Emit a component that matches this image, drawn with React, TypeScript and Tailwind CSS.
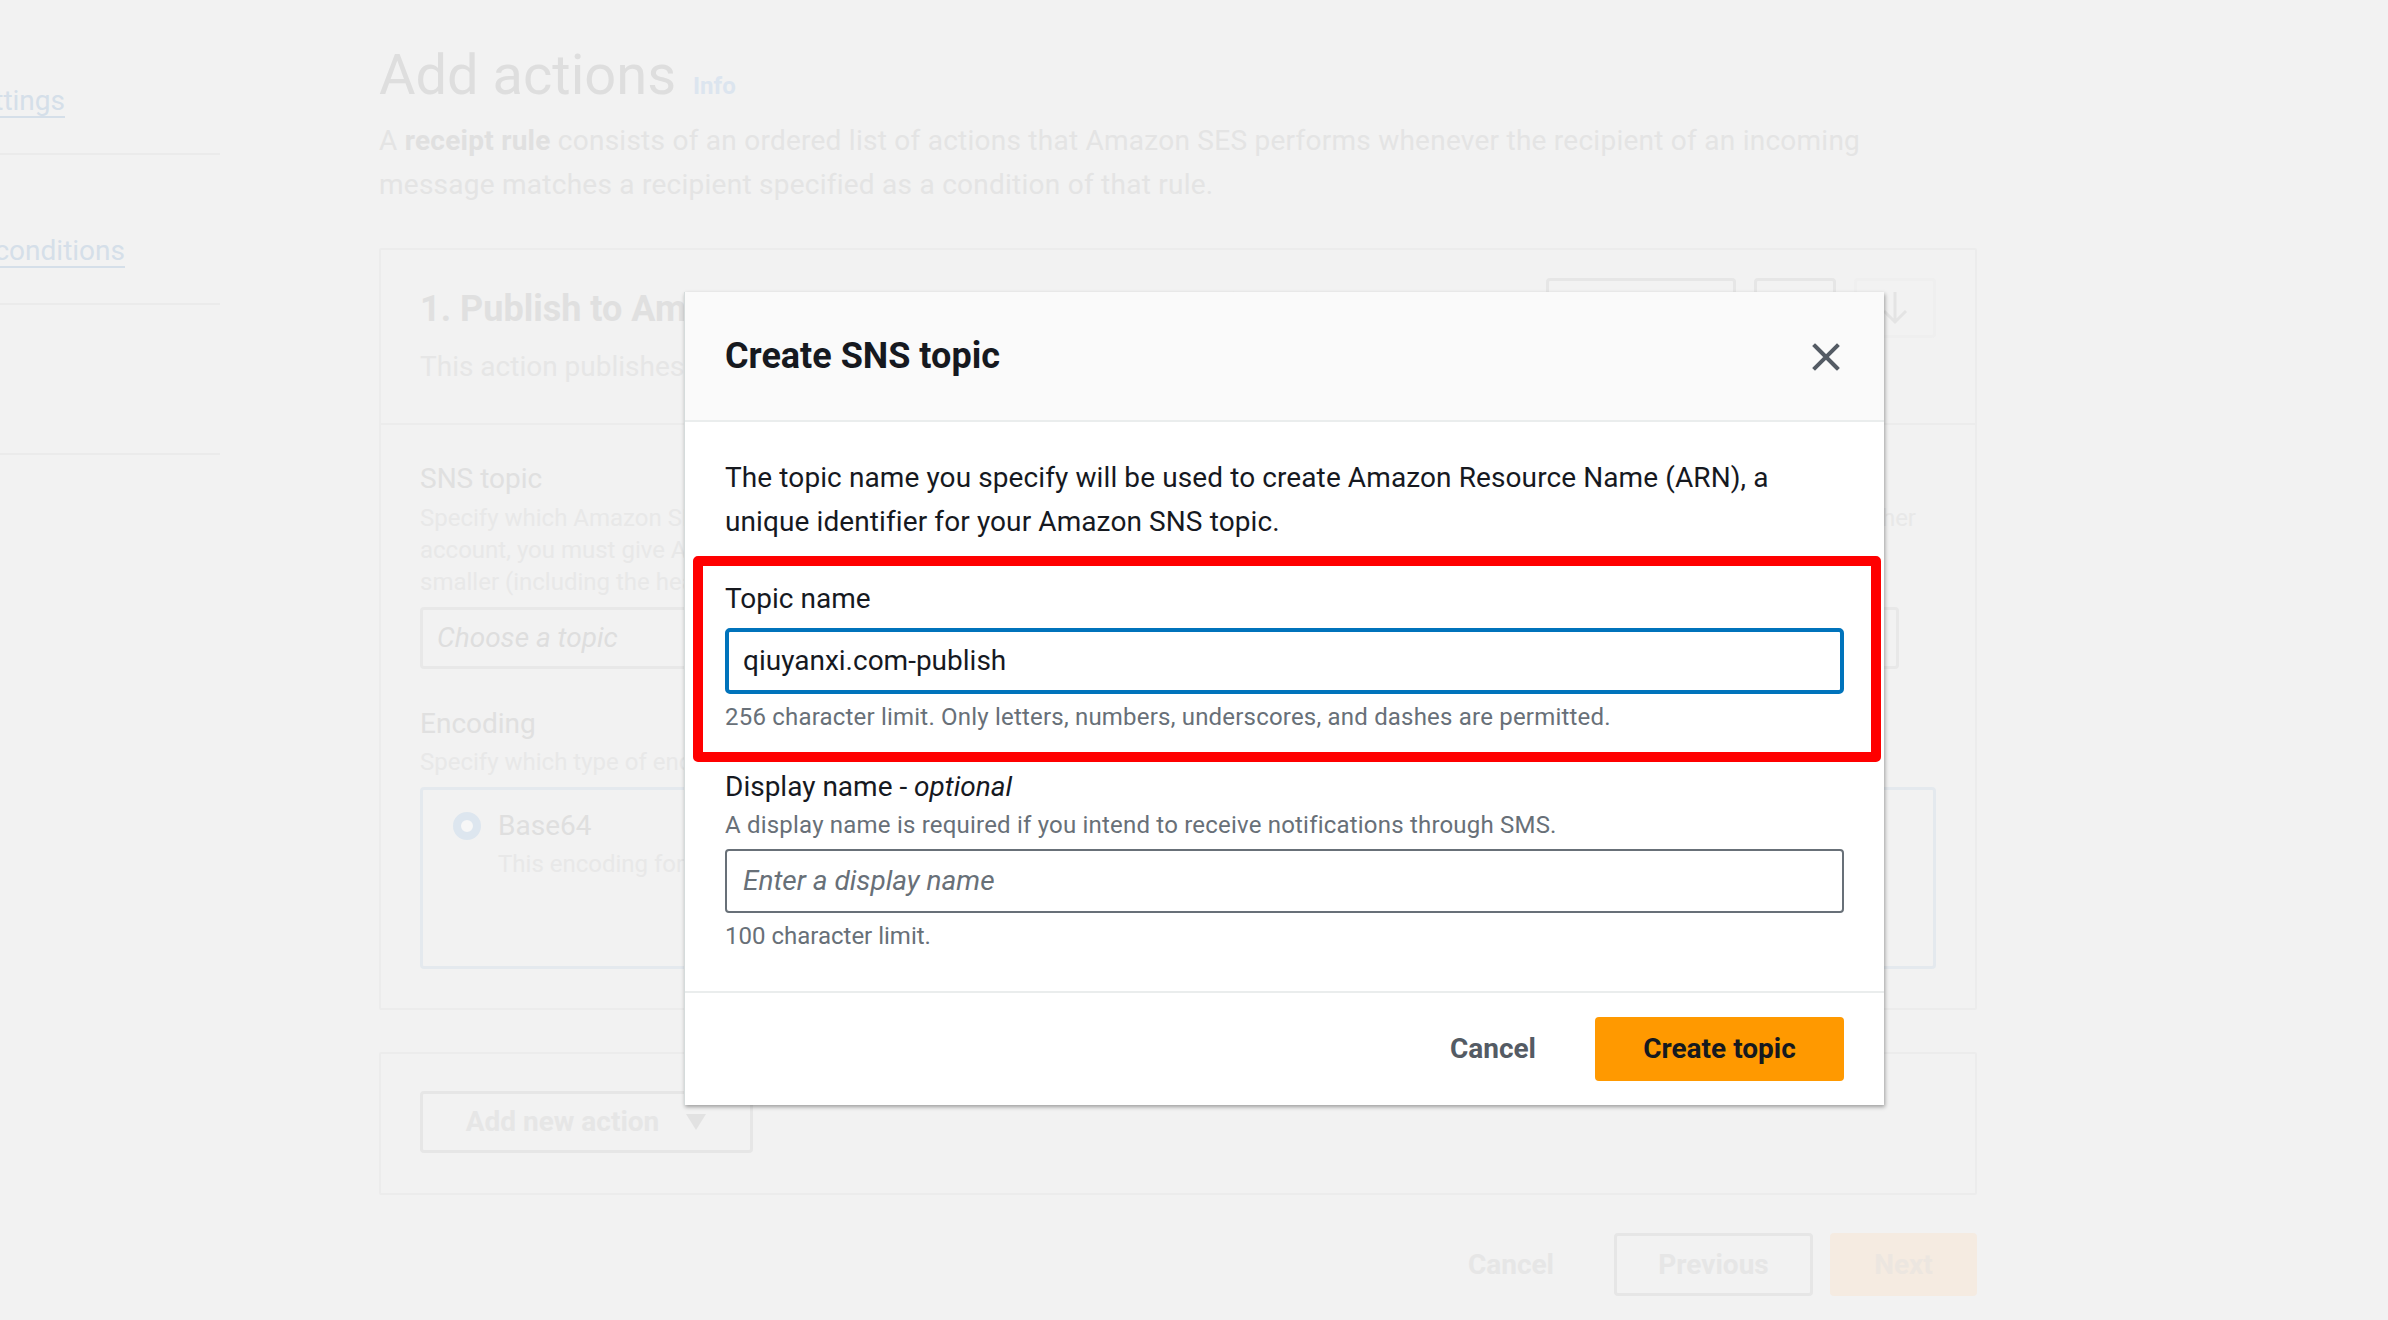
import React from "react";

const F = { fontFamily: "Roboto, 'Noto Sans', sans-serif" } as React.CSSProperties;

function NavItem({ text, width }: { text: string; width: number }) {
  return (
    <div className="h-[150px] border-b-2 border-[#ebebeb] flex flex-col justify-end pb-[30px]">
      {text ? (
        <div className="flex justify-end overflow-hidden whitespace-nowrap" style={{ width }}>
          <span className="text-[28px] leading-[44px] text-[#d5dfe9] underline decoration-2 underline-offset-[6px]">
            {text}
          </span>
        </div>
      ) : (
        <div className="h-[44px]" />
      )}
    </div>
  );
}

function Background() {
  return (
    <div className="flex">
      <nav className="w-[220px] pt-[5px] shrink-0">
        <NavItem text="Rule settings" width={65} />
        <NavItem text="Recipient conditions" width={125} />
        <NavItem text="" width={0} />
      </nav>
      <main className="ml-[159px] w-[1598px] pt-[35px]">
        <div className="flex items-baseline">
          <h1 className="text-[56px] leading-[80px] text-[#dedede]">Add actions</h1>
          <span className="ml-[17px] text-[24px] font-bold text-[#dce5ef]">Info</span>
        </div>
        <p className="mt-[4px] text-[28px] leading-[44px] text-[#e4e4e4] whitespace-nowrap tracking-[0.25px]">
          A <b className="text-[#e0e0e0]">receipt rule</b> consists of an ordered list of actions that Amazon SES performs whenever the recipient of an incoming
          <br />
          message matches a recipient specified as a condition of that rule.
        </p>

        <section className="mt-[41px] border-2 border-[#ececec] rounded-[2px]">
          <div className="flex justify-between items-start pl-[39px] pr-[39px] pt-[37px] pb-[34px] border-b-2 border-[#ececec]">
            <div>
              <div className="text-[36px] leading-[44px] font-bold text-[#e0e0e0] whitespace-nowrap">
                1. Publish to Amazon Simple Notification Service (SNS) topic
              </div>
              <div className="mt-[14px] text-[28px] leading-[44px] text-[#e6e6e6] whitespace-nowrap">
                This action publishes the email to an Amazon SNS topic.
              </div>
            </div>
            <div className="flex gap-[18px] -mt-[9px]">
              <div className="w-[190px] h-[60px] border-[3px] border-[#e6e6e6] rounded-[4px]" />
              <div className="w-[82px] h-[60px] border-[3px] border-[#e6e6e6] rounded-[4px]" />
              <div className="w-[82px] h-[60px] border-[3px] border-[#efefef] rounded-[4px] flex items-center justify-center">
                <svg width="30" height="36" viewBox="0 0 30 36" fill="none" stroke="#e4e4e4" strokeWidth="3">
                  <path d="M15 2v30M4 21l11 11 11-11" />
                </svg>
              </div>
            </div>
          </div>
          <div className="pl-[39px] pr-[39px] pt-[32px] pb-[39px]">
            <div className="text-[28px] leading-[44px] text-[#e0e0e0]">SNS topic</div>
            <div className="mt-[1px] text-[24px] leading-[32px] text-[#e8e8e8] whitespace-nowrap">
              <div className="flex justify-between pr-[20px]">
                <span>Specify which Amazon SNS topic you want to publish to. If the topic is owned by</span>
                <span>another</span>
              </div>
              <div>account, you must give Amazon SES permission to publish to it. The message must be 150 KB or</div>
              <div>smaller (including the header).</div>
            </div>
            <div className="mt-[9px] h-[62px] w-[1479px] border-[3px] border-[#e8e8e8] rounded-[4px] flex items-center pl-[14px]">
              <span className="text-[28px] italic text-[#dedede]">Choose a topic</span>
            </div>
            <div className="mt-[33px] text-[28px] leading-[44px] text-[#e0e0e0]">Encoding</div>
            <div className="text-[24px] leading-[32px] text-[#e8e8e8] whitespace-nowrap">
              Specify which type of encoding to use when Amazon SES publishes the message.
            </div>
            <div className="mt-[9px] h-[182px] border-[3px] border-[#e4e9ee] rounded-[4px] pl-[30px] pt-[14px]">
              <div className="flex items-center gap-[17px]">
                <div className="w-[28px] h-[28px] rounded-full border-[8px] border-[#dde6ef] bg-[#f7f7f7]" />
                <span className="text-[28px] leading-[44px] text-[#dfdfdf]">Base64</span>
              </div>
              <div className="pl-[45px] text-[24px] leading-[32px] text-[#e8e8e8] whitespace-nowrap">
                This encoding format preserves all special characters.
              </div>
            </div>
          </div>
        </section>

        <section className="mt-[42px] border-2 border-[#ececec] rounded-[2px] pl-[39px] pt-[37px] pb-[40px]">
          <div className="w-[333px] h-[62px] border-[3px] border-[#e6e6e6] rounded-[4px] flex items-center justify-center gap-[26px]">
            <span className="text-[28px] font-bold text-[#e6e6e6]">Add new action</span>
            <svg width="22" height="18" viewBox="0 0 22 18">
              <path d="M1 1h20L11 17z" fill="#e2e2e2" />
            </svg>
          </div>
        </section>

        <div className="mt-[38px] flex justify-end items-center">
          <span className="text-[28px] font-bold text-[#e6e6e6] px-[40px]">Cancel</span>
          <div className="ml-[20px] w-[199px] h-[63px] border-[3px] border-[#e6e6e6] rounded-[4px] flex items-center justify-center">
            <span className="text-[28px] font-bold text-[#e6e6e6]">Previous</span>
          </div>
          <div className="ml-[17px] w-[147px] h-[63px] bg-[#f5ebe1] rounded-[4px] flex items-center justify-center">
            <span className="text-[28px] font-bold text-[#ece6e0]">Next</span>
          </div>
        </div>
      </main>
    </div>
  );
}

function Modal() {
  return (
    <div className="absolute left-[684px] top-[292px] w-[1200px] bg-white shadow-[1px_2px_4px_rgba(0,0,0,0.35)] border-l border-[#d5dbdb]">
      <div className="h-[130px] bg-[#fafafa] border-b-2 border-[#eaeded] flex items-center justify-between pl-[40px] pr-[44px]">
        <h2 className="text-[36px] leading-[44px] font-bold text-[#16191f]">Create SNS topic</h2>
        <svg width="28" height="28" viewBox="0 0 28 28" fill="none" stroke="#545b64" strokeWidth="4" strokeLinecap="square" className="mt-[2px]">
          <path d="M3 3l22 22M25 3L3 25" />
        </svg>
      </div>
      <div className="pl-[40px] pr-[40px] pt-[34px] pb-[39px]">
        <p className="text-[28px] leading-[44px] text-[#16191f] tracking-[0.1px]">
          The topic name you specify will be used to create Amazon Resource Name (ARN), a
          <br />
          unique identifier for your Amazon SNS topic.
        </p>
        <div className="mt-[12px] -ml-[32px] -mr-[37px] border-[10px] border-[#ff0000] rounded-[5px] pl-[22px] pr-[27px] pt-[11px] pb-[19px]">
          <div className="text-[28px] leading-[44px] text-[#16191f]">Topic name</div>
          <div className="mt-[7px] h-[66px] border-[4px] border-[#0073bb] rounded-[5px] flex items-center pl-[14px]">
            <span className="text-[28px] text-[#16191f]">qiuyanxi.com-publish</span>
          </div>
          <div className="mt-[7px] text-[24px] leading-[32px] text-[#687078] tracking-[0.2px]">
            256 character limit. Only letters, numbers, underscores, and dashes are permitted.
          </div>
        </div>
        <div className="mt-[3px] text-[28px] leading-[44px] text-[#16191f]">
          Display name - <i>optional</i>
        </div>
        <div className="text-[24px] leading-[32px] text-[#687078] tracking-[0.2px]">
          A display name is required if you intend to receive notifications through SMS.
        </div>
        <div className="mt-[8px] h-[64px] border-2 border-[#687078] rounded-[4px] flex items-center pl-[16px]">
          <span className="text-[28px] italic text-[#687078]">Enter a display name</span>
        </div>
        <div className="mt-[7px] text-[24px] leading-[32px] text-[#687078]">100 character limit.</div>
      </div>
      <div className="border-t-2 border-[#eaeded] flex justify-end items-center pr-[40px] pt-[24px] pb-[24px]">
        <span className="text-[28px] font-bold text-[#545b64] px-[40px]">Cancel</span>
        <div className="ml-[19px] w-[249px] h-[64px] bg-[#ff9900] rounded-[4px] flex items-center justify-center">
          <span className="text-[28px] font-bold text-[#16191f]">Create topic</span>
        </div>
      </div>
    </div>
  );
}

export default function App() {
  return (
    <div className="relative w-[2388px] h-[1320px] overflow-hidden bg-[#f2f2f2]" style={F}>
      <Background />
      <Modal />
    </div>
  );
}
